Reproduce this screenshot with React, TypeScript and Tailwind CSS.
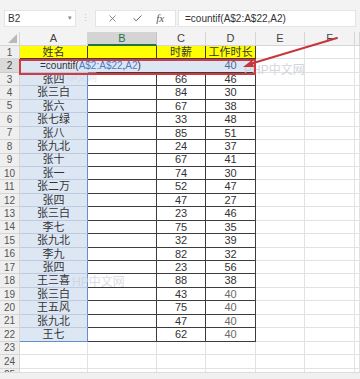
import React from "react";
import { X, Check } from "lucide-react";

type Row = [string, string, string];

const rows: Row[] = [
  ["张四", "66", "46"],
  ["张三白", "84", "30"],
  ["张六", "67", "38"],
  ["张七绿", "33", "48"],
  ["张八", "85", "51"],
  ["张九北", "24", "37"],
  ["张十", "67", "41"],
  ["张一", "74", "30"],
  ["张二万", "52", "47"],
  ["张四", "47", "27"],
  ["张三白", "23", "46"],
  ["李七", "75", "35"],
  ["张九北", "32", "39"],
  ["李九", "82", "32"],
  ["张四", "23", "56"],
  ["王三喜", "88", "38"],
  ["张三白", "43", "40"],
  ["王五风", "75", "40"],
  ["张九北", "47", "40"],
  ["王七", "62", "40"],
];

const font = { fontFamily: '"Liberation Sans", "Noto Sans CJK SC", sans-serif' };

const cell = "h-full shrink-0 flex items-center justify-center border-b border-r";

const RowHead = ({ n, active }: { n: number; active?: boolean }) => (
  <div
    className={
      active
        ? "h-full w-[20px] shrink-0 flex items-center justify-center border-r border-b border-[#c9c9c9] bg-[#dadada] text-[10px] text-[#444]"
        : "h-full w-[20px] shrink-0 flex items-center justify-center border-r border-b border-[#d6d6d6] bg-[#efefef] text-[10px] text-[#555]"
    }
  >
    {n}
  </div>
);

const EmptyTail = () => (
  <>
    <div className={`${cell} w-[49px] border-[#e2e2e2]`} />
    <div className={`${cell} w-[50px] border-[#e2e2e2]`} />
    <div className={`${cell} w-[5px] border-[#e2e2e2]`} />
  </>
);

export default function App() {
  return (
    <div className="relative w-[360px] h-[379px] overflow-hidden bg-white" style={font}>
      {/* toolbar */}
      <div className="h-[32px] bg-[#f3f3f3] flex items-start pt-[10px] pl-[4px]">
        <div className="w-[72px] h-[17px] bg-white border border-[#e4e4e4] flex items-center justify-between px-[3px] text-[10px] text-[#333]">
          <span>B2</span>
          <span className="text-[7px] text-[#888]">▾</span>
        </div>
        <div className="w-[19px] h-[17px] flex items-center justify-center text-[9px] text-[#c4c4c4]">⋮</div>
        <div className="w-[81px] h-[17px] bg-white border border-[#e4e4e4] flex items-center justify-around px-[4px] text-[#555]">
          <X size={11} strokeWidth={1.5} />
          <Check size={11} strokeWidth={2} />
          <span className="text-[11px] italic" style={{ fontFamily: '"Liberation Serif", serif' }}>
            fx
          </span>
        </div>
        <div className="ml-[2px] w-[178px] h-[17px] bg-white border border-[#e4e4e4] flex items-center pl-[6px] text-[10px] text-[#333]">
          =countif(A$2:A$22,A2)
        </div>
      </div>

      {/* column headers */}
      <div className="h-[14px] flex text-[11px] text-[#444]">
        <div className="relative h-full w-[20px] shrink-0 bg-[#f3f3f3] border-r border-b border-[#d6d6d6]">
          <div className="absolute right-[2px] bottom-[2px] w-0 h-0 border-l-[9px] border-l-transparent border-b-[9px] border-b-[#b9b9b9]" />
        </div>
        <div className={`${cell} w-[68px] bg-[#f3f3f3] border-[#d6d6d6]`}>A</div>
        <div className="h-full w-[69px] shrink-0 flex items-center justify-center bg-[#d4d4d4] border-r border-[#c4c4c4] border-b-2 border-b-[#217346] text-[#217346]">B</div>
        <div className={`${cell} w-[49px] bg-[#f3f3f3] border-[#d6d6d6]`}>C</div>
        <div className={`${cell} w-[50px] bg-[#f3f3f3] border-[#d6d6d6]`}>D</div>
        <div className={`${cell} w-[49px] bg-[#f3f3f3] border-[#d6d6d6]`}>E</div>
        <div className={`${cell} w-[50px] bg-[#f3f3f3] border-[#d6d6d6]`}>F</div>
        <div className={`${cell} w-[5px] bg-[#f3f3f3] border-[#d6d6d6]`} />
      </div>

      {/* grid body */}
      <div className="h-[326px] overflow-hidden text-[11px] text-[#333]">
        <div className="h-[13.45px] flex">
          <RowHead n={1} />
          <div className={`${cell} w-[68px] bg-[#ffff00] border-[#3c3c3c]`}>姓名</div>
          <div className={`${cell} w-[69px] bg-[#ffff00] border-[#3c3c3c]`} />
          <div className={`${cell} w-[49px] bg-[#ffff00] border-[#3c3c3c]`}>时薪</div>
          <div className={`${cell} w-[50px] bg-[#ffff00] border-[#3c3c3c]`}>工作时长</div>
          <EmptyTail />
        </div>

        <div className="h-[13.45px] flex">
          <RowHead n={2} active />
          <div className="h-full w-[68px] shrink-0 flex items-center border-b border-[#b7c8de] bg-[#dde7f4] pl-[20px] whitespace-nowrap">
            <span className="relative z-10 text-[10px] text-[#333]">
              =countif(<span className="text-[#4a7cc4]">A$2:A$22</span>,<span className="text-[#4a7cc4]">A2</span>)
            </span>
          </div>
          <div className="h-full w-[69px] shrink-0 border-b border-[#3c3c3c] bg-[#dde7f4]" />
          <div className="h-full w-[49px] shrink-0 border-b border-[#3c3c3c] bg-[#dde7f4]" />
          <div className={`${cell} w-[50px] bg-[#dde7f4] border-[#3c3c3c] text-[#4a6d9c]`}>40</div>
          <EmptyTail />
        </div>

        {rows.map((r, i) => {
          const n = i + 3;
          const last = n === 22;
          return (
            <div key={n} className="h-[13.45px] flex">
              <RowHead n={n} />
              <div
                className={
                  last
                    ? `${cell} w-[68px] bg-[#dde7f4] border-r-[#5f8fd0] border-b-[#5f8fd0]`
                    : `${cell} w-[68px] bg-[#dde7f4] border-b-[#bccbe0] border-r-[#5f8fd0]`
                }
              >
                {r[0]}
              </div>
              <div className={`${cell} w-[69px] border-[#3c3c3c]`} />
              <div className={`${cell} w-[49px] border-[#3c3c3c]`}>{r[1]}</div>
              <div className={n >= 19 ? `${cell} w-[50px] border-[#3c3c3c] text-[#6b6b6b]` : `${cell} w-[50px] border-[#3c3c3c]`}>
                {r[2]}
              </div>
              <EmptyTail />
            </div>
          );
        })}

        {[23, 24, 25].map((n) => (
          <div key={n} className="h-[13.45px] flex">
            <RowHead n={n} />
            <div className={`${cell} w-[68px] border-[#e2e2e2]`} />
            <div className={`${cell} w-[69px] border-[#e2e2e2]`} />
            <div className={`${cell} w-[49px] border-[#e2e2e2]`} />
            <div className={`${cell} w-[50px] border-[#e2e2e2]`} />
            <EmptyTail />
          </div>
        ))}
      </div>

      {/* bottom strip */}
      <div className="h-[7px] bg-[#f0f0f0] border-t border-[#dcdcdc]" />

      {/* watermarks */}
      <span className="absolute left-[244px] top-[61px] text-[12px] text-[#c9ccd2] opacity-80">PHP中文网</span>
      <span className="absolute left-[67px] top-[70px] text-[10px] text-[#d2d6dc] opacity-60">中文网</span>
      <span className="absolute left-[72px] top-[273px] text-[12px] text-[#ccd0d6] opacity-70">HP中文网</span>

      {/* red annotation box */}
      <div className="absolute left-[19px] top-[59px] w-[237px] h-[16px] border-2 border-[#d23a3f]" />

      {/* red arrow */}
      <svg className="absolute left-0 top-0 pointer-events-none" width="360" height="379">
        <line x1="337" y1="38" x2="250" y2="64" stroke="#c8363c" strokeWidth="2" strokeLinecap="round" />
        <polygon points="243,67 252,60 254,67" fill="#c8363c" />
      </svg>
    </div>
  );
}
